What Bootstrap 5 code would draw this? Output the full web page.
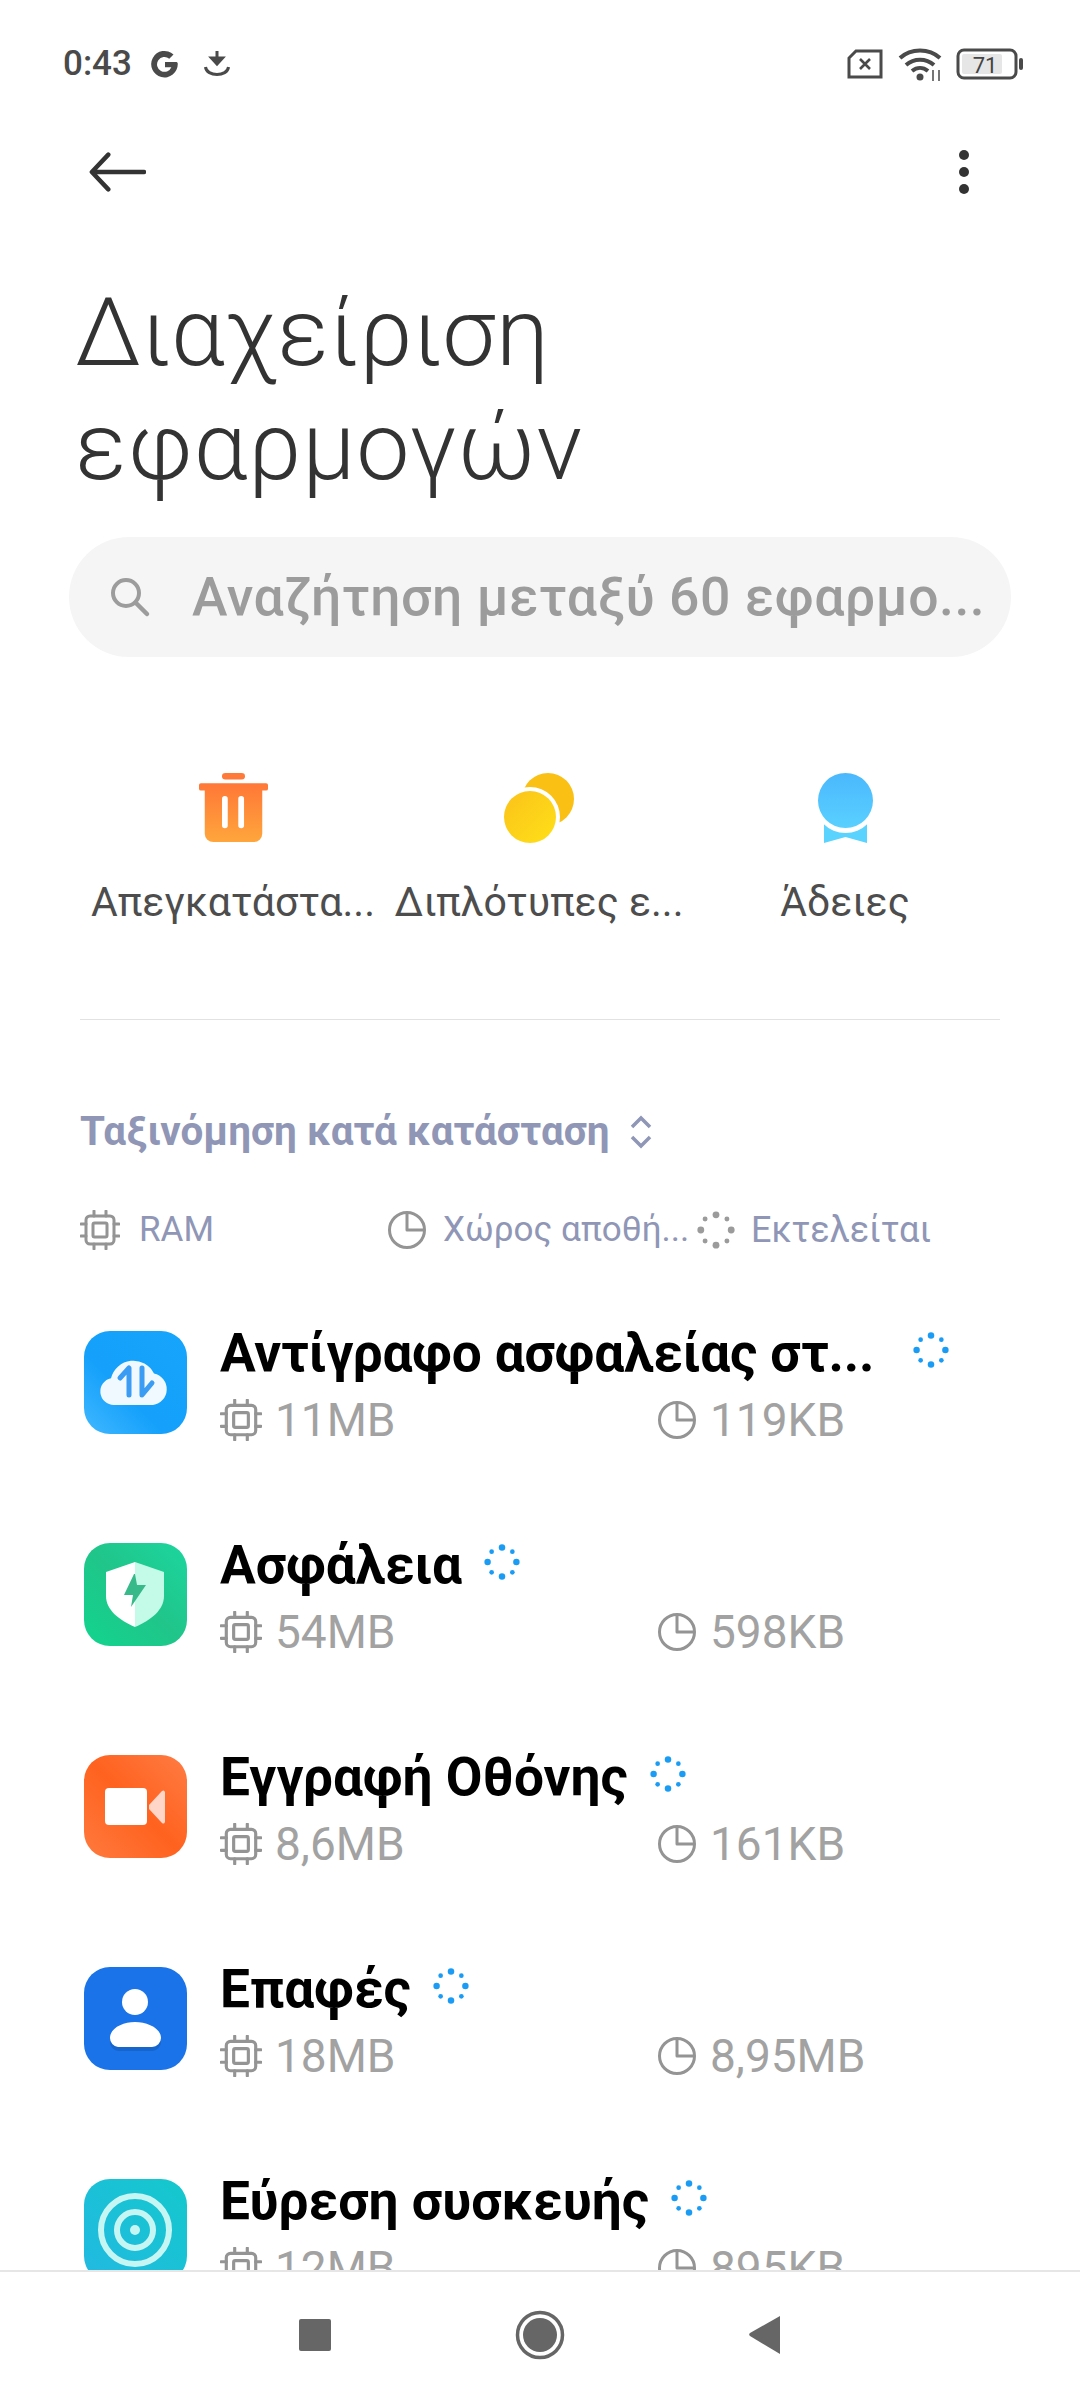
<!DOCTYPE html>
<html lang="el">
<head>
  <meta charset="utf-8">
  <title>Διαχείριση εφαρμογών</title>
  <link href="https://cdn.jsdelivr.net/npm/bootstrap@5.3.0/dist/css/bootstrap.min.css" rel="stylesheet">
  <style>
    body { font-family: Roboto, "Liberation Sans", sans-serif; background: #fff; width: 1080px; height: 2400px; overflow: hidden; }
    .screen { height: 2400px; }
    .status-bar { height: 124px; padding: 3px 56px 0 63px; color: #4a4a4a; }
    .status-time { font-size: 35px; font-weight: 500; line-height: 1; }
    .status-g { margin-left: 16px; }
    .status-dl { margin-left: 20px; }
    .status-right { gap: 13px; }
    .tool-bar { height: 96px; padding: 0 110px 0 88px; }
    .page-title { font-size: 95px; font-weight: 300; line-height: 114px; color: #333; margin: 56px 0 0 75px; letter-spacing: 1px; }
    .search-pill { height: 120px; margin: 33px 69px 0; padding: 0 28px 0 37px; border-radius: 60px; background: #f5f5f5; gap: 40px; }
    .search-text { font-size: 53.5px; font-weight: 500; color: #9c9c9c; white-space: nowrap; letter-spacing: .55px; }
    .shortcuts { margin: 116px 0 0 80px; width: 920px; }
    .shortcut { width: 306px; }
    .shortcut-label { font-size: 41px; line-height: 50px; color: #4d4d4d; margin-top: 34px; white-space: nowrap; }
    .rule { height: 1px; background: #e2e2e2; margin: 92px 80px 0; }
    .sort-line { margin: 90px 0 0 80px; gap: 19px; font-size: 40.4px; font-weight: 700; line-height: 44px; color: #8f96b6; }
    .legend { margin: 53px 0 0 80px; height: 46px; font-size: 35px; color: #8f96b6; white-space: nowrap; }
    .legend-a { width: 307px; gap: 19px; }
    .legend-b { width: 310px; gap: 16px; }
    .legend-c { gap: 16px; font-size: 36px; }
    .app-list { margin-top: 45px; min-height: 0; overflow: hidden; }
    .app-row { height: 212px; padding-left: 84px; flex: none; }
    .app-icon { width: 103px; height: 103px; margin-top: 33px; flex: none; }
    .app-body { margin-left: 33px; width: 820px; padding-top: 25px; }
    .app-name { font-size: 53.2px; font-weight: 700; line-height: 60px; color: #000; gap: 22px; white-space: nowrap; }
    .app-name svg { margin-bottom: 6px; }
    .name-cut { margin-right: 17px; letter-spacing: -.2px; }
    .app-meta { font-size: 46px; line-height: 50px; color: #a2a2a2; margin-top: 12px; }
    .meta-a { width: 437px; gap: 13px; }
    .meta-b { gap: 13px; }
    .nav-bar { height: 130px; background: #fff; border-top: 2px solid #e6e6e6; padding: 0 0 2px; }
    .nav-slot { width: 225px; }
  </style>
</head>
<body>
<svg width="0" height="0" class="d-block">
  <defs>
    <symbol id="chip" viewBox="0 0 40 40"><g fill="none" stroke="#949494" stroke-width="3"><rect x="6" y="6" width="28" height="28" rx="4"/><rect x="13" y="13" width="14" height="14" rx="1.5"/><path d="M14 1v5M26 1v5M14 34v5M26 34v5M1 14h5M1 26h5M34 14h5M34 26h5" stroke-linecap="round"/></g></symbol>
    <symbol id="pie" viewBox="0 0 40 40"><g fill="none" stroke="#949494" stroke-width="3" stroke-linejoin="round"><circle cx="20" cy="20" r="17.500"/><path d="M20 3v17h17.500"/></g></symbol>
    <symbol id="dots" viewBox="0 0 40 40"><circle cx="20" cy="4" r="3.600"/><circle cx="31.500" cy="8.500" r="2.600"/><circle cx="36" cy="20" r="3.600"/><circle cx="31.500" cy="31.500" r="2.600"/><circle cx="20" cy="36" r="3.600"/><circle cx="8.500" cy="31.500" r="2.600"/><circle cx="4" cy="20" r="3.600"/><circle cx="8.500" cy="8.500" r="2.600"/></symbol>
  </defs>
</svg>
<div class="screen d-flex flex-column">
  <div class="status-bar d-flex align-items-center flex-shrink-0">
    <span class="status-time">0:43</span>
    <svg class="status-g" width="34" height="34" viewBox="0 0 32 32"><path d="M27 14H16v5h6a7 7 0 1 1-2-8l4-4a12.500 12.500 0 1 0 4 9c0-.7 0-1.400-1-2z" fill="#4a4a4a"/></svg>
    <svg class="status-dl" width="30" height="30" viewBox="0 0 30 30"><path d="M15 2v11M9.500 9l5.500 6 5.500-6z" fill="#4a4a4a" stroke="#4a4a4a" stroke-width="3"/><path d="M3.500 18c1 10 22 10 23 0" fill="none" stroke="#4a4a4a" stroke-width="3"/></svg>
    <div class="ms-auto d-flex align-items-center status-right">
      <svg width="38" height="30" viewBox="0 0 36 30"><path d="M9 2h25v26H2V9z" fill="none" stroke="#4a4a4a" stroke-width="3"/><path d="M13 10l10 10M23 10L13 20" stroke="#4a4a4a" stroke-width="2.600"/></svg>
      <svg width="46" height="36" viewBox="0 0 46 36"><g fill="none" stroke="#4a4a4a" stroke-width="4"><path d="M3 12c11-10 29-10 40 0"/><path d="M9 19c8-7 20-7 28 0"/><path d="M15 25c5-4 11-4 16 0"/></g><circle cx="23" cy="31" r="3.500" fill="#4a4a4a"/><path d="M36 24v11M42 24v11" stroke="#4a4a4a" stroke-width="1.500"/></svg>
      <svg width="68" height="32" viewBox="0 0 68 32"><rect x="2" y="2" width="58" height="28" rx="6" fill="none" stroke="#4a4a4a" stroke-width="3"/><rect x="6" y="6" width="40" height="20" rx="2" fill="#e6e6e6"/><rect x="63" y="10" width="4" height="12" rx="2" fill="#4a4a4a"/><text x="29" y="25" font-family="Roboto" font-size="22" fill="#444" text-anchor="middle">71</text></svg>
    </div>
  </div>
  <div class="tool-bar d-flex align-items-center justify-content-between flex-shrink-0">
    <svg width="58" height="42" viewBox="0 0 60 42"><path d="M58 21H5M21 3L4 21l17 18" fill="none" stroke="#333" stroke-width="4.600" stroke-linecap="round" stroke-linejoin="round"/></svg>
    <svg width="12" height="46" viewBox="0 0 12 46"><circle cx="6" cy="6" r="5" fill="#333"/><circle cx="6" cy="23" r="5" fill="#333"/><circle cx="6" cy="40" r="5" fill="#333"/></svg>
  </div>
  <h1 class="page-title flex-shrink-0">Διαχείριση<br>εφαρμογών</h1>
  <div class="search-pill d-flex align-items-center overflow-hidden flex-shrink-0">
    <svg class="flex-shrink-0" width="46" height="46" viewBox="0 0 46 46"><circle cx="20" cy="19" r="13" fill="none" stroke="#9c9c9c" stroke-width="4"/><path d="M30 29l11 11" stroke="#9c9c9c" stroke-width="4.500" stroke-linecap="round"/></svg>
    <span class="search-text">Αναζήτηση μεταξύ 60 εφαρμο...</span>
  </div>
  <div class="shortcuts d-flex flex-shrink-0">
    <div class="shortcut d-flex flex-column align-items-center">
      <svg width="69" height="70" viewBox="0 0 72 76" preserveAspectRatio="none"><defs><linearGradient id="g1" x1="0" y1="0" x2="0" y2="1"><stop offset="0" stop-color="#ff7737"/><stop offset="1" stop-color="#ffa63c"/></linearGradient></defs><rect x="24" y="0" width="24" height="7" rx="3.500" fill="#ff7a38"/><path d="M2 11h68a2 2 0 0 1 2 2v4a2 2 0 0 1-2 2h-4v47a9 9 0 0 1-9 9H15a9 9 0 0 1-9-9V19H2a2 2 0 0 1-2-2v-4a2 2 0 0 1 2-2z" fill="url(#g1)"/><rect x="24" y="25" width="6" height="35" rx="3" fill="#fff"/><rect x="41" y="25" width="6" height="35" rx="3" fill="#fff"/></svg>
      <div class="shortcut-label">Απεγκατάστα...</div>
    </div>
    <div class="shortcut d-flex flex-column align-items-center">
      <svg width="70" height="70" viewBox="0 0 70 70"><defs><linearGradient id="g2" x1="0" y1="0" x2="1" y2="1"><stop offset="0" stop-color="#fbc21a"/><stop offset="1" stop-color="#fee018"/></linearGradient></defs><circle cx="44" cy="26" r="26" fill="#fbc014"/><circle cx="26" cy="44" r="30" fill="#fff"/><circle cx="26" cy="44" r="26" fill="url(#g2)"/></svg>
      <div class="shortcut-label">Διπλότυπες ε...</div>
    </div>
    <div class="shortcut d-flex flex-column align-items-center">
      <svg width="55" height="70" viewBox="0 0 55 70"><defs><linearGradient id="g3" x1="0" y1="0" x2="0" y2="1"><stop offset="0" stop-color="#4bb8fd"/><stop offset="1" stop-color="#59d0ff"/></linearGradient></defs><path d="M6 48h43v22l-21.500-6L6 70z" fill="#5ad3ff"/><circle cx="27.500" cy="29" r="31" fill="#fff"/><circle cx="27.500" cy="27.500" r="27.500" fill="url(#g3)"/></svg>
      <div class="shortcut-label">Άδειες</div>
    </div>
  </div>
  <div class="rule flex-shrink-0"></div>
  <div class="sort-line d-flex align-items-center flex-shrink-0">
    <span>Ταξινόμηση κατά κατάσταση</span>
    <svg width="24" height="34" viewBox="0 0 24 34"><path d="M3 12l9-9 9 9M3 22l9 9 9-9" fill="none" stroke="#8f96b6" stroke-width="3.500"/></svg>
  </div>
  <div class="legend d-flex align-items-center flex-shrink-0">
    <div class="legend-a d-flex align-items-center"><svg width="40" height="40"><use href="#chip"/></svg>RAM</div>
    <div class="legend-b d-flex align-items-center"><svg width="40" height="40"><use href="#pie"/></svg>Χώρος αποθή...</div>
    <div class="legend-c d-flex align-items-center"><svg width="38" height="38" fill="#9b9b9b"><use href="#dots"/></svg>Εκτελείται</div>
  </div>
  <div class="app-list flex-grow-1">
    <div class="app-row d-flex">
      <svg class="app-icon" viewBox="0 0 103 103"><defs><linearGradient id="a1" x1="0" y1="1" x2="1" y2="0"><stop offset="0" stop-color="#41b8ff"/><stop offset=".4" stop-color="#14a0fb"/><stop offset="1" stop-color="#16a5fc"/></linearGradient></defs><rect width="103" height="103" rx="26" fill="url(#a1)"/><path d="M30 74a13.500 13.500 0 0 1-3-26.700 23 23 0 0 1 43-4.800 16 16 0 0 1-1 31.500z" fill="#f0f9ff"/><path d="M36 47l9-10v27M58 37v27l10-12" fill="none" stroke="#3a9cf2" stroke-width="5" stroke-linecap="round" stroke-linejoin="round"/></svg>
      <div class="app-body">
        <div class="app-name d-flex align-items-center"><span class="name-cut">Αντίγραφο ασφαλείας στ...</span><svg width="36" height="36" fill="#1a9cf5"><use href="#dots"/></svg></div>
        <div class="app-meta d-flex"><div class="meta-a d-flex align-items-center"><svg width="42" height="42"><use href="#chip"/></svg>11MB</div><div class="meta-b d-flex align-items-center"><svg width="40" height="40"><use href="#pie"/></svg>119KB</div></div>
      </div>
    </div>
    <div class="app-row d-flex">
      <svg class="app-icon" viewBox="0 0 103 103"><defs><linearGradient id="a2" x1="0" y1="1" x2="1" y2="0"><stop offset="0" stop-color="#12d48f"/><stop offset=".5" stop-color="#20c58a"/><stop offset="1" stop-color="#1cd69e"/></linearGradient></defs><rect width="103" height="103" rx="26" fill="url(#a2)"/><path d="M51 19L22 29v24c0 14 13 24 29 31z" fill="#fff"/><path d="M51 19l29 10v24c0 14-13 24-29 31z" fill="#c3fbe8"/><path d="M50 31L40 52h9l-2 12 15-22h-9l-2-11z" fill="#37b98a"/></svg>
      <div class="app-body">
        <div class="app-name d-flex align-items-center"><span>Ασφάλεια</span><svg width="36" height="36" fill="#1a9cf5"><use href="#dots"/></svg></div>
        <div class="app-meta d-flex"><div class="meta-a d-flex align-items-center"><svg width="42" height="42"><use href="#chip"/></svg>54MB</div><div class="meta-b d-flex align-items-center"><svg width="40" height="40"><use href="#pie"/></svg>598KB</div></div>
      </div>
    </div>
    <div class="app-row d-flex">
      <svg class="app-icon" viewBox="0 0 103 103"><defs><linearGradient id="a3" x1="0" y1="1" x2="1" y2="0"><stop offset="0" stop-color="#ff7a3e"/><stop offset=".5" stop-color="#ff621f"/><stop offset="1" stop-color="#ff7c43"/></linearGradient></defs><rect width="103" height="103" rx="26" fill="url(#a3)"/><rect x="21" y="33" width="42" height="37" rx="4" fill="#fff"/><path d="M65 50l13-14a2 2 0 0 1 3 1v30a2 2 0 0 1-3 1L65 54z" fill="#ffd6c7"/></svg>
      <div class="app-body">
        <div class="app-name d-flex align-items-center"><span>Εγγραφή Οθόνης</span><svg width="36" height="36" fill="#1a9cf5"><use href="#dots"/></svg></div>
        <div class="app-meta d-flex"><div class="meta-a d-flex align-items-center"><svg width="42" height="42"><use href="#chip"/></svg>8,6MB</div><div class="meta-b d-flex align-items-center"><svg width="40" height="40"><use href="#pie"/></svg>161KB</div></div>
      </div>
    </div>
    <div class="app-row d-flex">
      <svg class="app-icon" viewBox="0 0 103 103"><rect width="103" height="103" rx="26" fill="#1a73e8"/><path d="M34 84a9 9 0 0 1-8-9c0-10 13-16 25-16s26 6 26 16a9 9 0 0 1-9 9z" fill="#1459b5" opacity=".55"/><circle cx="51" cy="35" r="13" fill="#fff"/><path d="M34 80a9 9 0 0 1-8-9c0-10 13-16 25-16s26 6 26 16a9 9 0 0 1-9 9z" fill="#fff"/></svg>
      <div class="app-body">
        <div class="app-name d-flex align-items-center"><span>Επαφές</span><svg width="36" height="36" fill="#1a9cf5"><use href="#dots"/></svg></div>
        <div class="app-meta d-flex"><div class="meta-a d-flex align-items-center"><svg width="42" height="42"><use href="#chip"/></svg>18MB</div><div class="meta-b d-flex align-items-center"><svg width="40" height="40"><use href="#pie"/></svg>8,95MB</div></div>
      </div>
    </div>
    <div class="app-row d-flex">
      <svg class="app-icon" viewBox="0 0 103 103"><defs><linearGradient id="a5" x1="0" y1="1" x2="1" y2="0"><stop offset="0" stop-color="#22b9e2"/><stop offset="1" stop-color="#14c8cc"/></linearGradient></defs><rect width="103" height="103" rx="26" fill="url(#a5)"/><circle cx="51" cy="51" r="34" fill="none" stroke="#c6f6f4" stroke-width="6"/><circle cx="51" cy="51" r="18" fill="none" stroke="#c6f6f4" stroke-width="6"/><circle cx="51" cy="51" r="5" fill="#c6f6f4"/></svg>
      <div class="app-body">
        <div class="app-name d-flex align-items-center"><span>Εύρεση συσκευής</span><svg width="36" height="36" fill="#1a9cf5"><use href="#dots"/></svg></div>
        <div class="app-meta d-flex"><div class="meta-a d-flex align-items-center"><svg width="42" height="42"><use href="#chip"/></svg>12MB</div><div class="meta-b d-flex align-items-center"><svg width="40" height="40"><use href="#pie"/></svg>895KB</div></div>
      </div>
    </div>
  </div>
  <div class="nav-bar d-flex align-items-center justify-content-center flex-shrink-0">
    <div class="nav-slot d-flex justify-content-center"><svg width="34" height="34" viewBox="0 0 34 34"><rect x="1" y="1" width="32" height="32" rx="2" fill="#666"/></svg></div>
    <div class="nav-slot d-flex justify-content-center"><svg width="50" height="50" viewBox="0 0 50 50"><circle cx="25" cy="25" r="22.500" fill="none" stroke="#666" stroke-width="3.500"/><circle cx="25" cy="25" r="17" fill="#666"/></svg></div>
    <div class="nav-slot d-flex justify-content-center"><svg width="34" height="40" viewBox="0 0 34 38" preserveAspectRatio="none"><path d="M32 1v36L2 20a2 2 0 0 1 0-3z" fill="#666"/></svg></div>
  </div>
</div>
</body>
</html>
